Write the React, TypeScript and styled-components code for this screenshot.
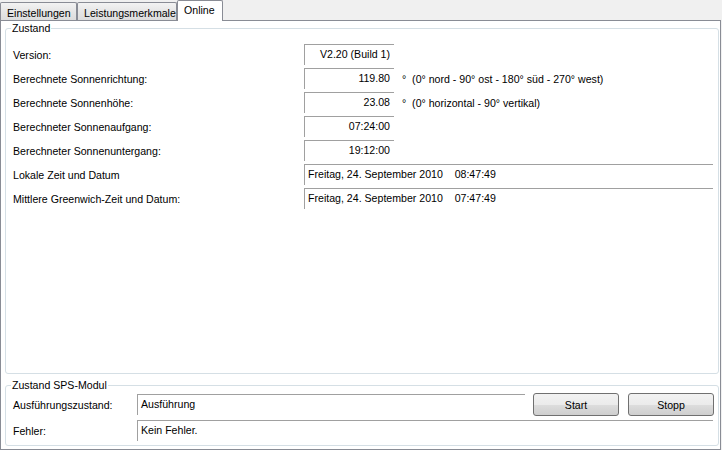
import React from "react";
import styled, { createGlobalStyle } from "styled-components";

const GlobalStyle = createGlobalStyle`
  html, body {
    margin: 0;
    padding: 0;
    background: #f0f0f0;
  }
  body {
    font-family: "Liberation Sans", Arial, sans-serif;
    font-size: 10.6px;
    color: #000;
  }
`;

const Window = styled.div`
  width: 722px;
  height: 450px;
  background: #f0f0f0;
  overflow: hidden;
`;

const TabStrip = styled.div`
  display: flex;
  align-items: flex-end;
  height: 20px;
  position: relative;
  z-index: 1;
`;

const Tab = styled.div<{ $active?: boolean; $width: number }>`
  box-sizing: border-box;
  width: ${(p) => p.$width}px;
  height: ${(p) => (p.$active ? 21 : 18)}px;
  margin-bottom: ${(p) => (p.$active ? -1 : 0)}px;
  border: 1px solid #898c95;
  border-bottom: none;
  border-radius: 2px 2px 0 0;
  background: ${(p) =>
    p.$active ? "#ffffff" : "linear-gradient(#f3f3f3, #e6e6e6 50%, #dddddd)"};
  padding: ${(p) => (p.$active ? "3px 0 0 6px" : "4px 0 0 6px")};
  line-height: 12px;
  white-space: nowrap;
`;

const Panel = styled.div`
  box-sizing: border-box;
  width: 721px;
  height: 430px;
  background: #ffffff;
  border: 1px solid #898c95;
  padding: 1px 1px 3px 4px;
  display: flex;
  flex-direction: column;
  gap: 5px;
`;

const Group = styled.fieldset<{ $grow?: boolean }>`
  box-sizing: border-box;
  margin: 0;
  min-width: 0;
  flex: ${(p) => (p.$grow ? "1" : "none")};
  border: 1px solid #d5dfe5;
  border-radius: 3px;
  padding: ${(p) => (p.$grow ? "9px 4px 0 6px" : "1px 4px 4px 6px")};
  display: flex;
  flex-direction: column;
  gap: ${(p) => (p.$grow ? 3 : 4)}px;
`;

const Legend = styled.legend`
  padding: 0 1px;
  margin-left: -1px;
  line-height: 13px;
`;

const Row = styled.div<{ $labelWidth: number }>`
  display: grid;
  grid-template-columns: ${(p) => p.$labelWidth}px 1fr;
  align-items: center;
  min-height: 21px;
`;

const Label = styled.span`
  padding-left: 1px;
  white-space: nowrap;
`;

const Field = styled.div`
  display: flex;
  align-items: center;
`;

const TextBox = styled.div<{ $width: number; $right?: boolean }>`
  box-sizing: border-box;
  width: ${(p) => p.$width}px;
  height: 21px;
  border-top: 1px solid #a0a0a0;
  border-left: 1px solid #a0a0a0;
  background: #ffffff;
  padding: ${(p) => (p.$right ? "0 4px 0 0" : "0 0 0 3px")};
  text-align: ${(p) => (p.$right ? "right" : "left")};
  line-height: 19px;
  white-space: pre;
`;

const Unit = styled.span`
  margin-left: 8px;
  white-space: pre;
`;

const Button = styled.button`
  box-sizing: border-box;
  width: 86px;
  height: 23px;
  margin-left: 8px;
  border: 1px solid #707070;
  border-radius: 3px;
  background: linear-gradient(#f2f2f2, #ebebeb 50%, #dddddd 50%, #cfcfcf);
  font-family: "Liberation Sans", Arial, sans-serif;
  font-size: 10.6px;
  color: #000;
  padding: 0;
  & + & {
    margin-left: 9px;
  }
`;

const rows = [
  { label: "Version:", value: "V2.20 (Build 1)" },
  {
    label: "Berechnete Sonnenrichtung:",
    value: "119.80",
    unit: "°  (0° nord - 90° ost - 180° süd - 270° west)",
  },
  {
    label: "Berechnete Sonnenhöhe:",
    value: "23.08",
    unit: "°  (0° horizontal - 90° vertikal)",
  },
  { label: "Berechneter Sonnenaufgang:", value: "07:24:00" },
  { label: "Berechneter Sonnenuntergang:", value: "19:12:00" },
];

export default function App() {
  return (
    <Window>
      <GlobalStyle />
      <TabStrip>
        <Tab $width={77}>Einstellungen</Tab>
        <Tab $width={100}>Leistungsmerkmale</Tab>
        <Tab $width={46} $active>
          Online
        </Tab>
      </TabStrip>
      <Panel>
        <Group $grow>
          <Legend>Zustand</Legend>
          {rows.map((r) => (
            <Row key={r.label} $labelWidth={292}>
              <Label>{r.label}</Label>
              <Field>
                <TextBox $width={90} $right>
                  {r.value}
                </TextBox>
                {r.unit && <Unit>{r.unit}</Unit>}
              </Field>
            </Row>
          ))}
          <Row $labelWidth={292}>
            <Label>Lokale Zeit und Datum</Label>
            <TextBox $width={409}>{"Freitag, 24. September 2010    08:47:49"}</TextBox>
          </Row>
          <Row $labelWidth={292}>
            <Label>Mittlere Greenwich-Zeit und Datum:</Label>
            <TextBox $width={409}>{"Freitag, 24. September 2010    07:47:49"}</TextBox>
          </Row>
        </Group>
        <Group>
          <Legend>Zustand SPS-Modul</Legend>
          <Row $labelWidth={125}>
            <Label>Ausführungszustand:</Label>
            <Field>
              <TextBox $width={388}>Ausführung</TextBox>
              <Button>Start</Button>
              <Button>Stopp</Button>
            </Field>
          </Row>
          <Row $labelWidth={125}>
            <Label>Fehler:</Label>
            <TextBox $width={576}>Kein Fehler.</TextBox>
          </Row>
        </Group>
      </Panel>
    </Window>
  );
}
